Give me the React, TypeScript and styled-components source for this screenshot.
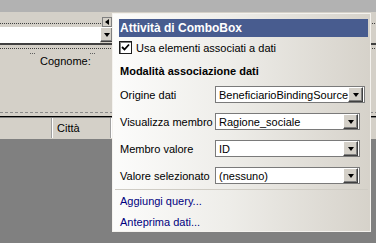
import React from 'react'
import styled, { createGlobalStyle } from 'styled-components'

const GlobalStyle = createGlobalStyle`
  html, body {
    margin: 0;
    padding: 0;
    background: #808080;
  }
  body {
    font-family: 'Liberation Sans', Arial, sans-serif;
    font-size: 11px;
    color: #000;
  }
`

const Screen = styled.div`
  position: relative;
  width: 376px;
  height: 243px;
  overflow: hidden;
  display: flex;
  flex-direction: column;
`

const TopStrip = styled.div`
  height: 12px;
  background: #b2b2b2;
`

const Canvas = styled.div`
  position: relative;
  height: 127px;
  background: #d4d0c8;
  display: flex;
  flex-direction: column;
`

const DotRule = styled.div<{ top: number }>`
  margin-top: ${p => p.top}px;
  height: 1px;
  background-image: linear-gradient(to right, #404040 50%, transparent 50%);
  background-size: 2px 1px;
`

const DashRule = styled.div<{ top: number }>`
  margin-top: ${p => p.top}px;
  height: 1px;
  background-image: linear-gradient(to right, #8a8a8a 60%, transparent 60%);
  background-size: 5px 1px;
`

const FieldRow = styled.div`
  display: flex;
  height: 16px;
  margin-top: 3px;
  border-bottom: 2px solid #404040;
`

const WhiteField = styled.div`
  width: 100px;
  background: #fff;
`

const DropButton = styled.div<{ w: number; h: number }>`
  width: ${p => p.w}px;
  height: ${p => p.h}px;
  box-sizing: border-box;
  background: #d4d0c8;
  border-top: 1px solid #fff;
  border-left: 1px solid #fff;
  border-right: 1px solid #404040;
  border-bottom: 1px solid #404040;
  box-shadow: inset -1px -1px 0 #808080;
  display: flex;
  align-items: center;
  justify-content: center;
  flex-shrink: 0;
`

const DownTri = styled.span`
  width: 0;
  height: 0;
  border-left: 3.5px solid transparent;
  border-right: 3.5px solid transparent;
  border-top: 4px solid #000;
`

const TagAnchor = styled.div`
  position: absolute;
  left: 102px;
  top: 5px;
  width: 10px;
  height: 10px;
  box-sizing: border-box;
  background: #d4d0c8;
  border: 1px solid #808080;
  display: flex;
  align-items: center;
  justify-content: center;
`

const LeftTri = styled.span`
  width: 0;
  height: 0;
  border-top: 3.5px solid transparent;
  border-bottom: 3.5px solid transparent;
  border-right: 4px solid #000;
`

const MarksRow = styled.div`
  position: relative;
  height: 14px;
  margin-top: 3px;
`

const Mark = styled.span<{ x: number }>`
  position: absolute;
  left: ${p => p.x}px;
  top: 1px;
  width: 6px;
  height: 1px;
  background-image: linear-gradient(to right, #606060 50%, transparent 50%);
  background-size: 2px 1px;
`

const FieldLabel = styled.div`
  padding-left: 40px;
  font-size: 11px;
  line-height: 11px;
  margin-top: 4px;
`

const SolidRule = styled.div`
  margin-top: 3px;
  height: 1px;
  background: #000;
  border-bottom: 1px solid #808080;
`

const GridHeader = styled.div`
  display: flex;
  height: 20px;
`

const HeaderCell = styled.div<{ w: number }>`
  width: ${p => p.w}px;
  box-sizing: border-box;
  border-right: 1px solid #fff;
  box-shadow: inset -1px 0 0 #a0a0a0;
  padding-left: 4px;
  display: flex;
  align-items: center;
`

const GrayArea = styled.div`
  flex: 1;
  background: #808080;
`

const Panel = styled.div`
  position: absolute;
  left: 112px;
  top: 13px;
  width: 259px;
  height: 219px;
  box-sizing: border-box;
  border: 1px solid #f4f2ee;
  background: linear-gradient(to right, #fcfcfb 0%, #eeede9 45%, #d6d2ca 100%);
  padding: 5px 2px 0 6px;
  display: flex;
  flex-direction: column;
`

const PanelHeader = styled.div`
  height: 18px;
  background: #485c8f;
  color: #fff;
  font-weight: bold;
  font-size: 12px;
  line-height: 18px;
  padding-left: 1px;
`

const CheckRow = styled.label`
  display: flex;
  align-items: center;
  gap: 4px;
  margin-top: 4px;
  height: 13px;
`

const CheckBox = styled.span`
  width: 13px;
  height: 13px;
  box-sizing: border-box;
  border: 1px solid #1c1c1c;
  box-shadow: inset 1px 1px 0 #808080;
  background: #fff;
  display: flex;
  align-items: center;
  justify-content: center;
`

const SectionTitle = styled.div`
  font-weight: bold;
  font-size: 11px;
  margin-top: 11px;
  padding-left: 1px;
  height: 13px;
  line-height: 13px;
`

const FieldList = styled.div`
  display: flex;
  flex-direction: column;
  gap: 10px;
  margin-top: 8px;
  padding-right: 8px;
`

const PropRow = styled.div`
  display: grid;
  grid-template-columns: 96px 1fr;
  align-items: center;
  height: 17px;
`

const PropLabel = styled.span`
  padding-left: 1px;
`

const Combo = styled.div`
  height: 17px;
  box-sizing: border-box;
  border: 1px solid #7a7a7a;
  background: #fff;
  display: flex;
  align-items: center;
  padding: 0 1px 0 3px;
`

const ComboText = styled.span`
  flex: 1;
  white-space: nowrap;
  overflow: hidden;
`

const Divider = styled.div`
  margin: 5px 0 0 -4px;
  height: 1px;
  background: #cfccc4;
`

const LinkList = styled.div`
  display: flex;
  flex-direction: column;
  gap: 8px;
  margin-top: 5px;
  padding-left: 1px;
`

const PanelLink = styled.a`
  color: #000080;
  text-decoration: none;
  line-height: 13px;
  cursor: pointer;
`

const bindings = [
  { label: 'Origine dati', value: 'BeneficiarioBindingSource' },
  { label: 'Visualizza membro', value: 'Ragione_sociale' },
  { label: 'Membro valore', value: 'ID' },
  { label: 'Valore selezionato', value: '(nessuno)' },
]

const App = () => {
  return (
    <Screen>
      <GlobalStyle />
      <TopStrip />
      <Canvas>
        <DotRule top={11} />
        <FieldRow>
          <WhiteField />
          <DropButton w={13} h={15}>
            <DownTri />
          </DropButton>
        </FieldRow>
        <TagAnchor>
          <LeftTri />
        </TagAnchor>
        <DotRule top={3} />
        <MarksRow>
          <Mark x={30} />
          <Mark x={90} />
          <FieldLabel>Cognome:</FieldLabel>
        </MarksRow>
        <DashRule top={46} />
        <SolidRule />
        <GridHeader>
          <HeaderCell w={53} />
          <HeaderCell w={59}>Città</HeaderCell>
        </GridHeader>
      </Canvas>
      <GrayArea />

      <Panel>
        <PanelHeader>Attività di ComboBox</PanelHeader>
        <CheckRow>
          <CheckBox>
            <svg width="9" height="9" viewBox="0 0 9 9">
              <path d="M1 4 L3.5 6.5 L8 1.5" stroke="#000" strokeWidth="1.8" fill="none" />
            </svg>
          </CheckBox>
          Usa elementi associati a dati
        </CheckRow>
        <SectionTitle>Modalità associazione dati</SectionTitle>
        <FieldList>
          {bindings.map(b => (
            <PropRow key={b.label}>
              <PropLabel>{b.label}</PropLabel>
              <Combo>
                <ComboText>{b.value}</ComboText>
                <DropButton w={15} h={15}>
                  <DownTri />
                </DropButton>
              </Combo>
            </PropRow>
          ))}
        </FieldList>
        <Divider />
        <LinkList>
          <PanelLink>Aggiungi query...</PanelLink>
          <PanelLink>Anteprima dati...</PanelLink>
        </LinkList>
      </Panel>
    </Screen>
  )
}

export default App
